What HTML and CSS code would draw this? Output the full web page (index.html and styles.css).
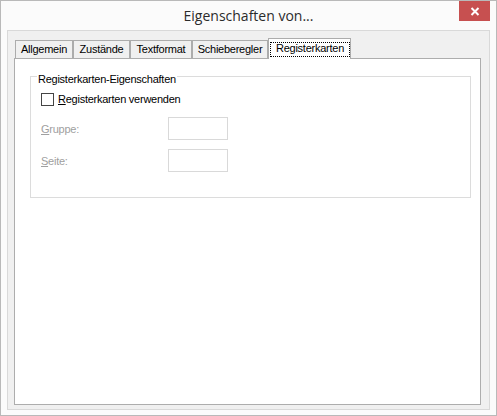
FILE: index.html
```html
<!DOCTYPE html>
<html lang="de">
<head>
<meta charset="utf-8">
<title>Eigenschaften von...</title>
<link rel="stylesheet" href="styles.css">
</head>
<body>
<div class="window">
  <div class="titlebar">
    <span class="titlebar-spacer"></span>
    <h1 class="title">Eigenschaften von...</h1>
    <button class="close" type="button" aria-label="Schließen">
      <svg width="10" height="9" viewBox="0 0 10 9" aria-hidden="true">
        <path d="M1.5 1 L8.5 8 M8.5 1 L1.5 8" stroke="#fff" stroke-width="2" fill="none"/>
      </svg>
    </button>
  </div>
  <div class="client">
    <div class="tabs">
      <div class="tab tab-general">Allgemein</div>
      <div class="tab tab-states">Zustände</div>
      <div class="tab tab-text">Textformat</div>
      <div class="tab tab-slider">Schieberegler</div>
      <div class="tab tab-pages active"><span class="focus">Registerkarten</span></div>
    </div>
    <div class="panel">
      <fieldset class="group">
        <legend class="group-title">Registerkarten-Eigenschaften</legend>
        <label class="check-row">
          <span class="checkbox"></span>
          <span class="check-label"><u>R</u>egisterkarten verwenden</span>
        </label>
        <div class="fields">
          <span class="field-label"><u>G</u>ruppe:</span>
          <span class="input"></span>
          <span class="field-label"><u>S</u>eite:</span>
          <span class="input"></span>
        </div>
      </fieldset>
    </div>
  </div>
</div>
</body>
</html>
```

FILE: styles.css
```css
html, body {
  margin: 0;
  padding: 0;
}

body {
  width: 497px;
  height: 416px;
  overflow: hidden;
  font-family: "Liberation Sans", Arial, sans-serif;
  font-size: 11px;
  letter-spacing: -0.25px;
  color: #000;
}

/* Dialog frame */
.window {
  box-sizing: border-box;
  width: 497px;
  height: 416px;
  border: 1px solid #b9b9b9;
  background: #fbfbfb;
  display: flex;
  flex-direction: column;
}

.titlebar {
  height: 29px;
  flex: none;
  display: grid;
  grid-template-columns: 1fr auto 1fr;
}

.title {
  margin: 0;
  font-family: "Open Sans", "Noto Sans", sans-serif;
  font-weight: 400;
  font-size: 14px;
  letter-spacing: 0;
  line-height: 29px;
  color: #2b2b2b;
  white-space: nowrap;
}

.close {
  justify-self: end;
  align-self: start;
  width: 31px;
  height: 20px;
  margin: 0 6px 0 0;
  padding: 0;
  border: 0;
  background: #c75050;
  display: flex;
  align-items: center;
  justify-content: center;
}

.close svg {
  display: block;
}

/* Client area holding the tab control */
.client {
  flex: 1;
  margin: 0 6px 5px 6px;
  border: 1px solid #d9d9d9;
  background: #f0f0f0;
  padding: 7px 8px 4px 6px;
  display: flex;
  flex-direction: column;
}

.tabs {
  flex: none;
  height: 20px;
  padding-left: 1px;
  display: flex;
  align-items: flex-end;
}

.tab {
  box-sizing: border-box;
  height: 18px;
  border: 1px solid #acacac;
  border-bottom: 0;
  background: #f0f0f0;
  line-height: 17px;
  text-align: center;
  white-space: nowrap;
}

.tab-general { width: 58px; }
.tab-states  { width: 57px; }
.tab-text    { width: 62px; }
.tab-slider  { width: 76px; }
.tab-pages   { width: 83px; }

.tab.active {
  height: 21px;
  margin-bottom: -1px;
  position: relative;
  z-index: 1;
  background: #fff;
  padding: 3px 0 0 1px;
  line-height: 11px;
}

.focus {
  display: block;
  border: 1px dotted #000;
  padding: 0 0 2px 0;
}

.panel {
  flex: 1;
  border: 1px solid #adadad;
  background: #fff;
  padding: 7px 9px 0 15px;
}

/* Group box */
.group {
  margin: 0;
  border: 1px solid #dcdcdc;
  padding: 7px 10px 25px 10px;
}

.group-title {
  padding: 7px 1px 0 1px;
  margin-left: -4px;
  line-height: 13px;
}

.check-row {
  display: flex;
  align-items: center;
  gap: 4px;
  height: 13px;
}

.checkbox {
  box-sizing: border-box;
  width: 13px;
  height: 13px;
  border: 1px solid #444;
  background: #fff;
}

.check-label {
  line-height: 13px;
}

.fields {
  margin-top: 11px;
  display: grid;
  grid-template-columns: 127px 60px;
  grid-auto-rows: 23px;
  row-gap: 9px;
  align-items: center;
}

.field-label {
  color: #a0a0a0;
}

.input {
  box-sizing: border-box;
  height: 23px;
  border: 1px solid #d9d9d9;
  background: #fff;
}
```
